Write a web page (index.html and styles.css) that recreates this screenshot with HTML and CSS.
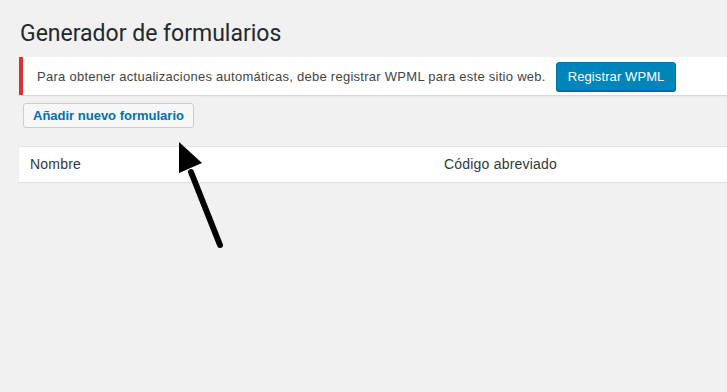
FILE: index.html
```html
<!DOCTYPE html>
<html lang="es">
<head>
  <meta charset="UTF-8" />
  <title>Generador de formularios</title>
  <link rel="stylesheet" href="styles.css">
</head>
<body>
  <div class="wrap">
    <h1>Generador de formularios</h1>

    <div class="notice notice-error">
      <p>Para obtener actualizaciones automáticas, debe registrar WPML para este sitio web.</p>
      <a class="button-primary" href="#">Registrar WPML</a>
    </div>

    <a class="button-secondary" href="#">Añadir nuevo formulario</a>

    <div class="list-table">
      <div class="col-name">Nombre</div>
      <div class="col-code">Código abreviado</div>
    </div>
  </div>

  <svg class="pointer-arrow" width="60" height="120" viewBox="0 0 60 120">
    <line x1="16" y1="30" x2="45" y2="103" stroke="#000" stroke-width="6" stroke-linecap="round" />
    <polygon points="4,0 4,31 27,21" fill="#000" />
  </svg>
</body>
</html>
```

FILE: styles.css
```css
body {
  margin: 0;
  background: #f1f1f1;
  font-family: "Liberation Sans", Arial, sans-serif;
  color: #23282d;
  overflow: hidden;
  position: relative;
  min-height: 392px;
}

.wrap {
  margin: 0 0 0 19px;
}

h1 {
  font-family: Roboto, "Liberation Sans", sans-serif;
  font-size: 23px;
  font-weight: 400;
  line-height: 29px;
  margin: 0;
  padding: 19px 0 9px 1px;
}

.notice {
  display: flex;
  align-items: center;
  gap: 10px;
  background: #fff;
  border-left: 4px solid #dc3232;
  box-shadow: 0 1px 1px rgba(0, 0, 0, 0.1);
  padding: 5px 12px 4px 14px;
  margin-bottom: 8px;
}

.notice p {
  margin: 0;
  font-size: 13px;
  letter-spacing: 0.27px;
  color: #444;
}

.button-primary {
  display: inline-block;
  background: #0085ba;
  border: 1px solid #0073aa;
  border-radius: 3px;
  box-shadow: 0 1px 0 #006799;
  color: #fff;
  font-size: 13px;
  letter-spacing: 0.1px;
  line-height: 27px;
  padding: 0 11px;
  text-decoration: none;
}

.button-secondary {
  display: inline-block;
  margin-left: 4px;
  background: #f7f7f7;
  border: 1px solid #ccc;
  border-radius: 3px;
  color: #0073aa;
  font-size: 13px;
  font-weight: 700;
  line-height: 23px;
  padding: 0 9px;
  text-decoration: none;
}

.list-table {
  display: grid;
  grid-template-columns: 414px 1fr;
  margin-top: 18px;
  background: #fff;
  border-top: 1px solid #e5e5e5;
  box-shadow: 0 1px 1px rgba(0, 0, 0, 0.07);
  font-size: 14px;
  letter-spacing: 0.2px;
  color: #32373c;
}

.col-name,
.col-code {
  padding: 9px 0 9px 11px;
  line-height: 17px;
}

.pointer-arrow {
  position: absolute;
  left: 175px;
  top: 142px;
}
```
